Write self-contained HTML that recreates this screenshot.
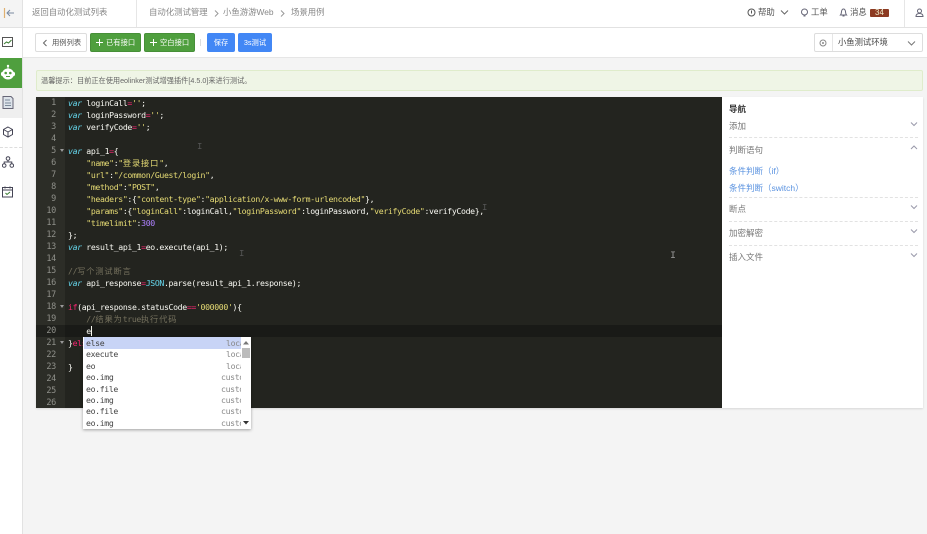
<!DOCTYPE html>
<html lang="zh">
<head>
<meta charset="utf-8">
<style>
html,body{margin:0;padding:0;width:927px;height:534px;overflow:hidden;background:#f4f4f4;font-family:"Liberation Sans","Noto Sans CJK SC",sans-serif;color:#666}
#w{position:absolute;left:0;top:0;width:927px;height:534px;overflow:hidden;background:#f4f4f4;filter:blur(.25px)}
div,span,svg{box-sizing:border-box}
.a{position:absolute;white-space:nowrap}
.t{font-size:8.4px;line-height:12px}
.btn{position:absolute;top:33px;height:19px;border-radius:2px;color:#fff;font-size:7.3px;line-height:19px;white-space:nowrap}
.g{background:#4f9f3e;border:1px solid #478f38}
.b{background:#4287f5;text-align:center}
.ln{position:absolute;left:36px;width:20px;text-align:right;color:#8f908a;font:8.5px/12px "DejaVu Sans Mono",monospace;letter-spacing:-.3px}
.c{position:absolute;left:68px;white-space:pre;color:#f8f8f2;font:8.2px/12px "DejaVu Sans Mono","Noto Sans CJK SC",monospace;letter-spacing:-.36px}
.k{color:#66d9ef;font-style:italic}
.p{color:#f92672}
.s{color:#e6db74}
.n{color:#ae81ff}
.m{color:#75715e}
.y{color:#66d9ef}
.h{letter-spacing:.9px}
.r{position:absolute;left:84px;width:157px;height:11.4px;font:8.2px/11.4px "DejaVu Sans Mono",monospace;letter-spacing:-.36px;color:#444;padding-left:2px;overflow:hidden;white-space:pre}
.r i{position:absolute;top:0;font-style:normal;color:#888}
.l i{left:142px}
.u i{left:137px}
.nav{position:absolute;left:729px;font-size:8.5px;line-height:12px;color:#777;white-space:nowrap}
.dash{position:absolute;left:729px;width:189px;border-top:1px dashed #e2e2e2}
</style>
</head>
<body>
<div id="w">
<!-- Sidebar -->
<div class="a" style="left:0;top:0;width:23px;height:534px;background:#fff;border-right:1px solid #e2e2e2"></div>
<div class="a" style="left:0;top:0;width:22px;height:27px;background:#f4f4f4"></div>
<svg class="a" style="left:2px;top:6px" width="16" height="14" viewBox="0 0 16 14" fill="none"><path d="M2.500 2v10" stroke="#e0b070" stroke-width="1.200"/><path d="M12 7H5M8 4L5 7l3 3" stroke="#7a8aa0" stroke-width="1"/></svg>
<div class="a" style="left:0;top:27px;width:23px;height:1px;background:#e2e2e2"></div>
<svg class="a" style="left:2px;top:37px" width="12" height="11" viewBox="0 0 12 11" fill="none"><rect x=".5" y=".5" width="10" height="9" fill="#fff" stroke="#555"/><path d="M2 7l2.500-2 2 1L9.500 3" stroke="#3b7d33"/></svg>
<div class="a" style="left:0;top:58px;width:22px;height:30px;background:#4f9f3e"></div>
<svg class="a" style="left:1px;top:64px" width="14" height="17" viewBox="0 0 14 17"><circle cx="7" cy="2" r="1.200" fill="#fff"/><path d="M7 2.500v3" stroke="#fff"/><ellipse cx="7" cy="10" rx="6" ry="5.500" fill="#fff"/><rect x="0" y="8" width="14" height="4" rx="1.500" fill="#fff"/><circle cx="4.700" cy="9" r="1.300" fill="#4f9f3e"/><circle cx="9.300" cy="9" r="1.300" fill="#4f9f3e"/><path d="M5 12.500h4" stroke="#4f9f3e"/></svg>
<div class="a" style="left:0;top:88px;width:22px;height:30px;background:#efefef"></div>
<svg class="a" style="left:2px;top:96px" width="12" height="13" viewBox="0 0 12 13" fill="none"><path d="M1 .5h8l2 2v10H1z" fill="#dde3ea" stroke="#667"/><path d="M3 4h5M3 7h6M3 9.500h6" stroke="#7b8a99"/></svg>
<svg class="a" style="left:2px;top:126px" width="12" height="12" viewBox="0 0 12 12" fill="none"><path d="M6 1l4.500 2.500v5L6 11 1.500 8.500v-5zM6 6l4.500-2.500M6 6L1.500 3.500M6 6v5" stroke="#445"/></svg>
<div class="a" style="left:0;top:147px;width:22px;border-top:1px dashed #ddd"></div>
<svg class="a" style="left:2px;top:156px" width="12" height="12" viewBox="0 0 12 12" fill="none"><circle cx="6" cy="2.500" r="1.800" stroke="#445"/><circle cx="2.200" cy="9.500" r="1.800" stroke="#445"/><circle cx="9.800" cy="9.500" r="1.800" stroke="#445"/><path d="M2.200 7.500V6h7.600v1.500M6 4.500V6" stroke="#445"/></svg>
<svg class="a" style="left:2px;top:186px" width="12" height="12" viewBox="0 0 12 12" fill="none"><rect x=".5" y="1.500" width="10" height="9.500" stroke="#445"/><path d="M.5 4h10" stroke="#445"/><path d="M3.500 7l1.500 1.500L8 6" stroke="#3b7d33"/><path d="M3 .5v2M8 .5v2" stroke="#445"/></svg>

<!-- Header -->
<div class="a" style="left:23px;top:0;width:904px;height:28px;background:#fff;border-bottom:1px solid #e2e2e2"></div>
<div class="a t" style="left:32px;top:6px;color:#888">返回自动化测试列表</div>
<div class="a" style="left:136px;top:0;width:1px;height:27px;background:#e6e6e6"></div>
<div class="a t" style="left:149px;top:6px;color:#888">自动化测试管理</div>
<svg class="a" style="left:214px;top:10px" width="5" height="7" viewBox="0 0 5 7" fill="none"><path d="M1 .5l3 3-3 3" stroke="#999"/></svg>
<div class="a t" style="left:223px;top:6px;color:#888">小鱼游游Web</div>
<svg class="a" style="left:280px;top:10px" width="5" height="7" viewBox="0 0 5 7" fill="none"><path d="M1 .5l3 3-3 3" stroke="#999"/></svg>
<div class="a t" style="left:291px;top:6px;color:#888">场景用例</div>

<svg class="a" style="left:747px;top:8px" width="9" height="9" viewBox="0 0 9 9" fill="none"><circle cx="4.500" cy="4.500" r="3.500" stroke="#555"/><path d="M4.500 2.500v3" stroke="#555"/></svg>
<div class="a t" style="left:758px;top:6px;color:#555">帮助</div>
<svg class="a" style="left:780px;top:10px" width="9" height="5" viewBox="0 0 9 5" fill="none"><path d="M1 .5l3.500 3.500L8 .5" stroke="#666"/></svg>
<svg class="a" style="left:800px;top:8px" width="9" height="9" viewBox="0 0 9 9" fill="none"><circle cx="4.500" cy="4" r="3" stroke="#667"/><path d="M3.500 8h2" stroke="#667"/></svg>
<div class="a t" style="left:811px;top:6px;color:#555">工单</div>
<svg class="a" style="left:839px;top:8px" width="9" height="9" viewBox="0 0 9 9" fill="none"><path d="M1.500 7c1-1 .8-2 1-3.500C2.800 2 3.500 1 4.500 1s1.700 1 2 2.500C6.700 5 6.500 6 7.500 7zM3.500 8h2" stroke="#667"/></svg>
<div class="a t" style="left:850px;top:6px;color:#555">消息</div>
<div class="a" style="left:870px;top:9px;width:19px;height:8px;background:#8c3a22;border-radius:1px;color:#eec;font-size:8px;line-height:8px;text-align:center">34</div>
<div class="a" style="left:904px;top:0;width:1px;height:27px;background:#e6e6e6"></div>
<svg class="a" style="left:915px;top:8px" width="9" height="9" viewBox="0 0 9 9" fill="none"><circle cx="4.500" cy="3" r="2" stroke="#667"/><path d="M1 8.500c0-2 1.500-3 3.500-3s3.500 1 3.500 3z" stroke="#667"/></svg>

<!-- Toolbar -->
<div class="a" style="left:23px;top:28px;width:904px;height:30px;background:#fff;border-bottom:1px solid #e6e6e6"></div>
<div class="btn" style="left:35px;width:52px;background:#fff;border:1px solid #ddd;color:#555;line-height:17px;padding-left:16px">用例列表</div>
<svg class="a" style="left:42px;top:39px" width="6" height="8" viewBox="0 0 6 8" fill="none"><path d="M4.500 1L1.500 4l3 3" stroke="#666"/></svg>
<div class="btn g" style="left:90px;width:51px;line-height:17px;padding-left:15px">已有接口</div>
<svg class="a" style="left:96px;top:39px" width="7" height="7" viewBox="0 0 7 7" fill="none"><path d="M3.500 0v7M0 3.500h7" stroke="#fff"/></svg>
<div class="btn g" style="left:144px;width:51px;line-height:17px;padding-left:15px">空白接口</div>
<svg class="a" style="left:150px;top:39px" width="7" height="7" viewBox="0 0 7 7" fill="none"><path d="M3.500 0v7M0 3.500h7" stroke="#fff"/></svg>
<div class="a" style="left:200px;top:39px;width:1px;height:7px;background:#ddd"></div>
<div class="btn b" style="left:207px;width:28px">保存</div>
<div class="btn b" style="left:238px;width:34px">3s测试</div>
<div class="a" style="left:814px;top:33px;width:109px;height:19px;background:#fff;border:1px solid #ddd;border-radius:2px"></div>
<div class="a" style="left:832px;top:34px;width:1px;height:17px;background:#e6e6e6"></div>
<svg class="a" style="left:819px;top:39px" width="8" height="8" viewBox="0 0 8 8" fill="none"><circle cx="4" cy="4" r="3" stroke="#888"/><circle cx="4" cy="4" r="1" fill="#888"/></svg>
<div class="a" style="left:838px;top:36px;color:#444;font-size:8.3px;line-height:13px">小鱼测试环境</div>
<svg class="a" style="left:907px;top:41px" width="9" height="5" viewBox="0 0 9 5" fill="none"><path d="M1 .5l3.500 3.500L8 .5" stroke="#777"/></svg>

<!-- Notice -->
<div class="a" style="left:36px;top:70px;width:887px;height:21px;background:#eff5e6;border:1px solid #dfeccb;border-radius:2px"></div>
<div class="a" style="left:41px;top:75px;color:#666;font-size:7.2px;line-height:12px">温馨提示：目前正在使用eolinker测试增强插件[4.5.0]来进行测试。</div>

<!-- Editor -->
<div class="a" style="left:36px;top:97px;width:887px;height:311px;background:#fff;box-shadow:0 1px 2px rgba(0,0,0,.12)"></div>
<div class="a" style="left:36px;top:97px;width:686px;height:311px;background:#23241f"></div>
<div class="a" style="left:36px;top:97px;width:29px;height:311px;background:#2c2d27"></div>
<div class="a" style="left:36px;top:325px;width:686px;height:12px;background:#191a17"></div>
<div class="a" style="left:36px;top:325px;width:29px;height:12px;background:#1f201c"></div>

<div class="ln" style="top:97px">1</div><div class="ln" style="top:109px">2</div><div class="ln" style="top:121px">3</div><div class="ln" style="top:133px">4</div><div class="ln" style="top:145px">5</div><div class="ln" style="top:157px">6</div><div class="ln" style="top:169px">7</div><div class="ln" style="top:181px">8</div><div class="ln" style="top:193px">9</div><div class="ln" style="top:205px">10</div><div class="ln" style="top:217px">11</div><div class="ln" style="top:229px">12</div><div class="ln" style="top:241px">13</div><div class="ln" style="top:253px">14</div><div class="ln" style="top:265px">15</div><div class="ln" style="top:277px">16</div><div class="ln" style="top:289px">17</div><div class="ln" style="top:301px">18</div><div class="ln" style="top:313px">19</div><div class="ln" style="top:325px">20</div><div class="ln" style="top:337px">21</div><div class="ln" style="top:349px">22</div><div class="ln" style="top:361px">23</div><div class="ln" style="top:373px">24</div><div class="ln" style="top:385px">25</div><div class="ln" style="top:397px">26</div>

<div class="c" style="top:97px"><span class="k">var</span> loginCall<span class="p">=</span><span class="s">''</span>;</div>
<div class="c" style="top:109px"><span class="k">var</span> loginPassword<span class="p">=</span><span class="s">''</span>;</div>
<div class="c" style="top:121px"><span class="k">var</span> verifyCode<span class="p">=</span><span class="s">''</span>;</div>
<div class="c" style="top:145px"><span class="k">var</span> api_1<span class="p">=</span>{</div>
<div class="c" style="top:157px">    <span class="s">"name"</span>:<span class="s">"<span class="h">登录接口</span>"</span>,</div>
<div class="c" style="top:169px">    <span class="s">"url"</span>:<span class="s">"/common/Guest/login"</span>,</div>
<div class="c" style="top:181px">    <span class="s">"method"</span>:<span class="s">"POST"</span>,</div>
<div class="c" style="top:193px">    <span class="s">"headers"</span>:{<span class="s">"content-type"</span>:<span class="s">"application/x-www-form-urlencoded"</span>},</div>
<div class="c" style="top:205px">    <span class="s">"params"</span>:{<span class="s">"loginCall"</span>:loginCall,<span class="s">"loginPassword"</span>:loginPassword,<span class="s">"verifyCode"</span>:verifyCode},</div>
<div class="c" style="top:217px">    <span class="s">"timelimit"</span>:<span class="n">300</span></div>
<div class="c" style="top:229px">};</div>
<div class="c" style="top:241px"><span class="k">var</span> result_api_1<span class="p">=</span>eo.execute(api_1);</div>
<div class="c" style="top:265px"><span class="m">//<span class="h">写个测试断言</span></span></div>
<div class="c" style="top:277px"><span class="k">var</span> api_response<span class="p">=</span><span class="y">JSON</span>.parse(result_api_1.response);</div>
<div class="c" style="top:301px"><span class="p">if</span>(api_response.statusCode<span class="p">==</span><span class="s">'000000'</span>){</div>
<div class="c" style="top:313px">    <span class="m">//<span class="h">结果为</span>true<span class="h">执行代码</span></span></div>
<div class="c" style="top:325px">    e</div>
<div class="a" style="left:91px;top:326px;width:1px;height:10px;background:#f8f8f0"></div>
<div class="c" style="top:337px">}<span class="p">els</span></div>
<div class="c" style="top:361px">}</div>
<svg class="a" style="left:60px;top:149px" width="4" height="3"><path d="M0 0h4L2 3z" fill="#999"/></svg>
<svg class="a" style="left:60px;top:305px" width="4" height="3"><path d="M0 0h4L2 3z" fill="#999"/></svg>
<svg class="a" style="left:60px;top:341px" width="4" height="3"><path d="M0 0h4L2 3z" fill="#999"/></svg>
<div class="a" style="left:197px;top:142px;color:#555;font:9px/10px 'Liberation Mono',monospace">I</div>
<div class="a" style="left:482px;top:203px;color:#555;font:9px/10px 'Liberation Mono',monospace">I</div>
<div class="a" style="left:239px;top:249px;color:#555;font:9px/10px 'Liberation Mono',monospace">I</div>
<div class="a" style="left:670px;top:252px;color:#999;font:10px/10px 'Liberation Mono',monospace">I</div>

<!-- Autocomplete -->
<div class="a" style="left:83px;top:337px;width:168px;height:92px;background:#fff;box-shadow:0 1px 3px rgba(0,0,0,.35)"></div>
<div class="a" style="left:84px;top:337px;width:157px;height:12px;background:#c8d4f6"></div>
<div class="r l" style="top:338px">else<i>local</i></div>
<div class="r l" style="top:349.400px">execute<i>local</i></div>
<div class="r l" style="top:360.800px">eo<i>local</i></div>
<div class="r u" style="top:372.200px">eo.img<i>custom</i></div>
<div class="r u" style="top:383.600px">eo.file<i>custom</i></div>
<div class="r u" style="top:395px">eo.img<i>custom</i></div>
<div class="r u" style="top:406.400px">eo.file<i>custom</i></div>
<div class="r u" style="top:417.500px">eo.img<i>custom</i></div>
<div class="a" style="left:242px;top:348px;width:8px;height:10px;background:#bbb"></div>
<svg class="a" style="left:243px;top:341px" width="6" height="4"><path d="M0 3.500h6L3 0z" fill="#777"/></svg>
<svg class="a" style="left:243px;top:421px" width="6" height="4"><path d="M0 0h6L3 3.500z" fill="#333"/></svg>

<!-- Right panel -->
<div class="nav" style="top:103px;color:#333;font-weight:bold">导航</div>
<div class="nav" style="top:120px">添加</div>
<div class="dash" style="top:137px"></div>
<div class="nav" style="top:144px">判断语句</div>
<div class="nav" style="top:165px;color:#5b93e0">条件判断（if）</div>
<div class="nav" style="top:182px;color:#5b93e0">条件判断（switch）</div>
<div class="dash" style="top:197px"></div>
<div class="nav" style="top:203px">断点</div>
<div class="dash" style="top:221px"></div>
<div class="nav" style="top:227px">加密解密</div>
<div class="dash" style="top:245px"></div>
<div class="nav" style="top:251px">插入文件</div>
<svg class="a" style="left:910px;top:122px" width="8" height="5" viewBox="0 0 8 5" fill="none"><path d="M1 .5l3 3 3-3" stroke="#99a"/></svg>
<svg class="a" style="left:910px;top:145px" width="8" height="5" viewBox="0 0 8 5" fill="none"><path d="M1 4l3-3 3 3" stroke="#99a"/></svg>
<svg class="a" style="left:910px;top:205px" width="8" height="5" viewBox="0 0 8 5" fill="none"><path d="M1 .5l3 3 3-3" stroke="#99a"/></svg>
<svg class="a" style="left:910px;top:229px" width="8" height="5" viewBox="0 0 8 5" fill="none"><path d="M1 .5l3 3 3-3" stroke="#99a"/></svg>
<svg class="a" style="left:910px;top:253px" width="8" height="5" viewBox="0 0 8 5" fill="none"><path d="M1 .5l3 3 3-3" stroke="#99a"/></svg>
</div>
</body>
</html>
